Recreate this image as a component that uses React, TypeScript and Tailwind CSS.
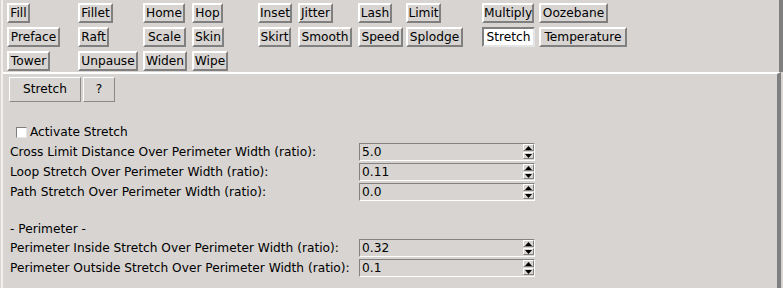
import React from "react";

type B = [string, number];

const rows: B[][] = [
  [["Fill", 23], ["Fillet", 35], ["Home", 42], ["Hop", 31], ["Inset", 34], ["Jitter", 35], ["Lash", 34], ["Limit", 35], ["Multiply", 52], ["Oozebane", 69]],
  [["Preface", 53], ["Raft", 31], ["Scale", 43], ["Skin", 32], ["Skirt", 33], ["Smooth", 54], ["Speed", 45], ["Splodge", 57], ["Stretch", 53], ["Temperature", 88]],
  [["Tower", 43], ["Unpause", 60], ["Widen", 44], ["Wipe", 36]],
];

function ToolButton({ label, width, selected }: { label: string; width: number; selected?: boolean }) {
  return (
    <div
      style={{ width }}
      className={
        selected
          ? "justify-self-start h-[20px] border-2 border-t-[#808080] border-l-[#808080] border-b-[#e4e4e4] border-r-[#e4e4e4] bg-white leading-[16px] whitespace-nowrap text-center"
          : "justify-self-start h-[20px] border-2 border-t-white border-l-white border-b-[#808080] border-r-[#808080] bg-[#d7d4d1] leading-[16px] whitespace-nowrap text-center"
      }
    >
      {label}
    </div>
  );
}

function Arrow({ up }: { up?: boolean }) {
  return (
    <div className="h-[7px] w-[11px] border border-t-white border-l-white border-b-[#808080] border-r-[#808080] bg-[#d7d4d1] flex items-center justify-center">
      <svg width="7" height="4" viewBox="0 0 7 4">
        {up ? <polygon points="3.5,0 7,4 0,4" fill="#000" /> : <polygon points="0,0 7,0 3.5,4" fill="#000" />}
      </svg>
    </div>
  );
}

function Spin({ value }: { value: string }) {
  return (
    <div className="mt-[1px] h-[18px] w-[176px] border border-t-[#828282] border-l-[#828282] border-b-white border-r-white flex items-center">
      <span className="pl-[2px] leading-[16px] flex-1">{value}</span>
      <div className="flex flex-col gap-[1px] self-start">
        <Arrow up />
        <Arrow />
      </div>
    </div>
  );
}

function Row({ label, value }: { label: string; value: string }) {
  return (
    <div className="h-[20px] flex items-start">
      <div className="w-[349px] h-[20px] flex items-center whitespace-nowrap">{label}</div>
      <Spin value={value} />
    </div>
  );
}

export default function App() {
  return (
    <div
      className="w-[783px] h-[288px] overflow-hidden bg-[#d7d4d1] text-[12.2px] text-black pl-[1px]"
      style={{ fontFamily: '"DejaVu Sans", Verdana, sans-serif' }}
    >
      <div className="h-full border-l-2 border-[#f1f0ef] flex flex-col">
        <div className="h-[72px] w-[780px] border-r-4 border-[#7f7f7f] pt-[3px] pl-[4px] shrink-0">
          <div className="grid grid-cols-[71px_65px_49px_66px_40px_60px_48px_76px_57px_auto] gap-y-[4px]">
            {rows.map((r, ri) =>
              r.map(([b, w], bi) => (
                <ToolButton key={ri + "-" + bi} label={b} width={w} selected={ri === 1 && b === "Stretch"} />
              ))
            )}
          </div>
        </div>
        <div className="flex-1 w-[778px] border-t-2 border-t-white border-r-4 border-r-[#7f7f7f]">
          <div className="mt-[3px] ml-[6px] flex gap-[2px] h-[25px]">
            <div className="w-[72px] h-[25px] border border-t-white border-l-white border-b-[#8a8a8a] border-r-[#8a8a8a] flex items-center justify-center">
              Stretch
            </div>
            <div className="w-[32px] h-[25px] border border-t-white border-l-white border-b-[#8a8a8a] border-r-[#8a8a8a] flex items-center justify-center">
              ?
            </div>
          </div>
          <div className="h-[20px]" />
          <div className="h-[20px] flex items-center pl-[13px]">
            <div className="w-[11px] h-[11px] bg-white border border-t-[#7d7d7d] border-l-[#7d7d7d] border-b-[#e6e6e6] border-r-[#e6e6e6]" />
            <span className="ml-[3px]">Activate Stretch</span>
          </div>
          <div className="pl-[7px]">
            <Row label="Cross Limit Distance Over Perimeter Width (ratio):" value="5.0" />
            <Row label="Loop Stretch Over Perimeter Width (ratio):" value="0.11" />
            <Row label="Path Stretch Over Perimeter Width (ratio):" value="0.0" />
            <div className="h-[18px]" />
            <div className="h-[18px] flex items-center">- Perimeter -</div>
            <Row label="Perimeter Inside Stretch Over Perimeter Width (ratio):" value="0.32" />
            <Row label="Perimeter Outside Stretch Over Perimeter Width (ratio):" value="0.1" />
          </div>
        </div>
      </div>
    </div>
  );
}
